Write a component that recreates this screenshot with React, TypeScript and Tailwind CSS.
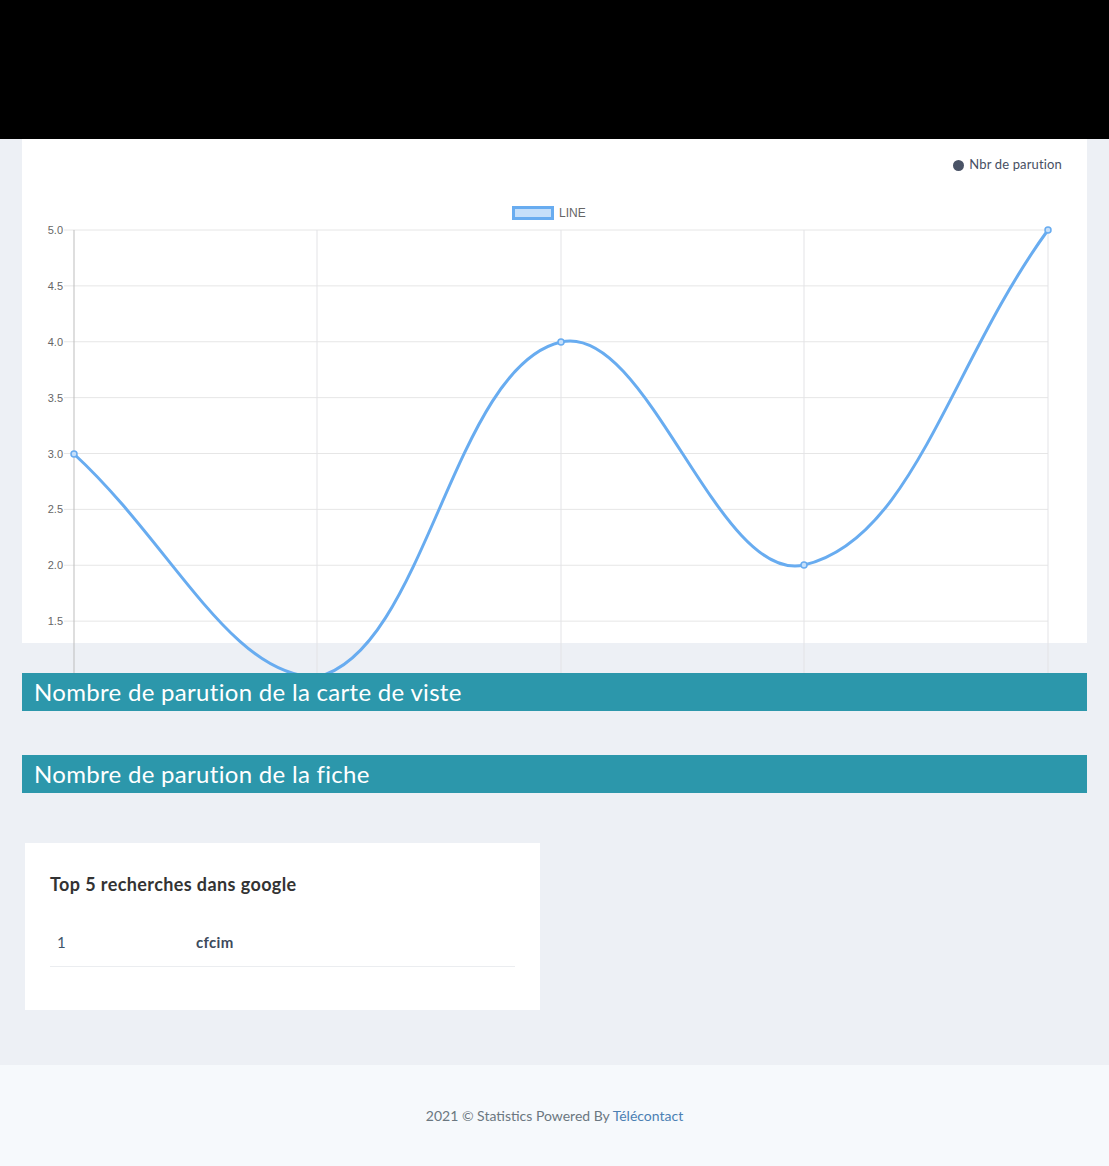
import React from 'react';

const yTicks = [5.0, 4.5, 4.0, 3.5, 3.0, 2.5, 2.0, 1.5, 1.0];
const xs = [74, 317, 561, 804, 1048];
const pts: [number, number][] = [
  [74, 454],
  [317, 677],
  [561, 342],
  [804, 565],
  [1048, 230],
];

const yPos = (v: number) => 230 + (5 - v) * 111.75;

const LineChart: React.FC = () => {
  return (
    <svg className="block w-[1065px] h-[500px] overflow-visible" viewBox="0 0 1065 500">
      <g transform="translate(-22,-191)">
        {/* legend */}
        <rect x="513.5" y="207.5" width="39" height="11" fill="#c5dffa" stroke="#68acf0" strokeWidth="3" />
        <text x="559" y="217" fontSize="12" fill="#666" fontFamily="'Liberation Sans', Arial, sans-serif">
          LINE
        </text>

        {/* horizontal grid + labels */}
        {yTicks.map((v) => (
          <g key={v}>
            <line x1="64" x2="1048" y1={yPos(v)} y2={yPos(v)} stroke="#e6e6e6" strokeWidth="1" />
            <text
              x="63"
              y={yPos(v) + 4}
              textAnchor="end"
              fontSize="11"
              fill="#666"
              fontFamily="'Liberation Sans', Arial, sans-serif"
            >
              {v.toFixed(1)}
            </text>
          </g>
        ))}

        {/* vertical grid */}
        {xs.map((x, i) => (
          <line
            key={x}
            x1={x}
            x2={x}
            y1="230"
            y2="687"
            stroke={i === 0 ? '#bdbdbd' : '#e3e3e6'}
            strokeWidth="1"
          />
        ))}

        {/* curve */}
        <path
          d="M74,454 C171.2,543.2 230.7,677 317,677 C425.5,652.1 452.5,366.9 561,342 C647.3,322.1 717.7,584.9 804,565 C912.5,540.1 950.4,364 1048,230"
          fill="none"
          stroke="#68acf0"
          strokeWidth="3"
        />
        {pts.map(([x, y]) => (
          <circle key={x} cx={x} cy={y} r="3" fill="#c5dffa" stroke="#68acf0" strokeWidth="1.5" />
        ))}
      </g>
    </svg>
  );
};

const SectionBar: React.FC<{ title: string }> = ({ title }) => (
  <div className="relative z-10 h-[38px] bg-[#2c97ab] flex items-center pl-[12px]">
    <h2 className="text-white text-[24px] tracking-[0.3px] leading-none">{title}</h2>
  </div>
);

export default function App() {
  return (
    <div className="min-h-screen bg-[#edf0f5] font-['Lato','Open_Sans',sans-serif]">
      <div className="h-[139px] bg-black" />

      <main className="px-[22px]">
        {/* chart card */}
        <div className="h-[504px] bg-white">
          <div className="h-[52px] flex items-center justify-end pr-[25px] gap-[5px]">
            <span className="w-[11px] h-[11px] rounded-full bg-[#4a5366]" />
            <span className="text-[13px] text-[#474f63] tracking-[0.15px]">Nbr de parution</span>
          </div>
          <LineChart />
        </div>

        <div className="mt-[30px]">
          <SectionBar title="Nombre de parution de la carte de viste" />
        </div>

        <div className="mt-[44px]">
          <SectionBar title="Nombre de parution de la fiche" />
        </div>

        <div className="mt-[50px] ml-[3px] w-[515px] h-[167px] bg-white px-[25px] pt-[31px]">
          <h3 className="text-[18px] font-bold text-[#333] leading-[20px] tracking-[0.4px]">
            Top 5 recherches dans google
          </h3>
          <div className="mt-[29px] flex items-center h-[44px] border-b border-[#ebedf0] pb-[4px] text-[15px]">
            <span className="w-[146px] pl-[7px] text-[#3e5569]">1</span>
            <span className="font-bold text-[#3d4a5c] tracking-[0.3px]">cfcim</span>
          </div>
        </div>
      </main>

      <footer className="mt-[55px] h-[101px] bg-[#f6f9fc] flex items-center justify-center">
        <p className="text-[14px] text-[#6b7780]">
          2021 © Statistics Powered By <a className="text-[#4b80b3]">Télécontact</a>
        </p>
      </footer>
    </div>
  );
}
